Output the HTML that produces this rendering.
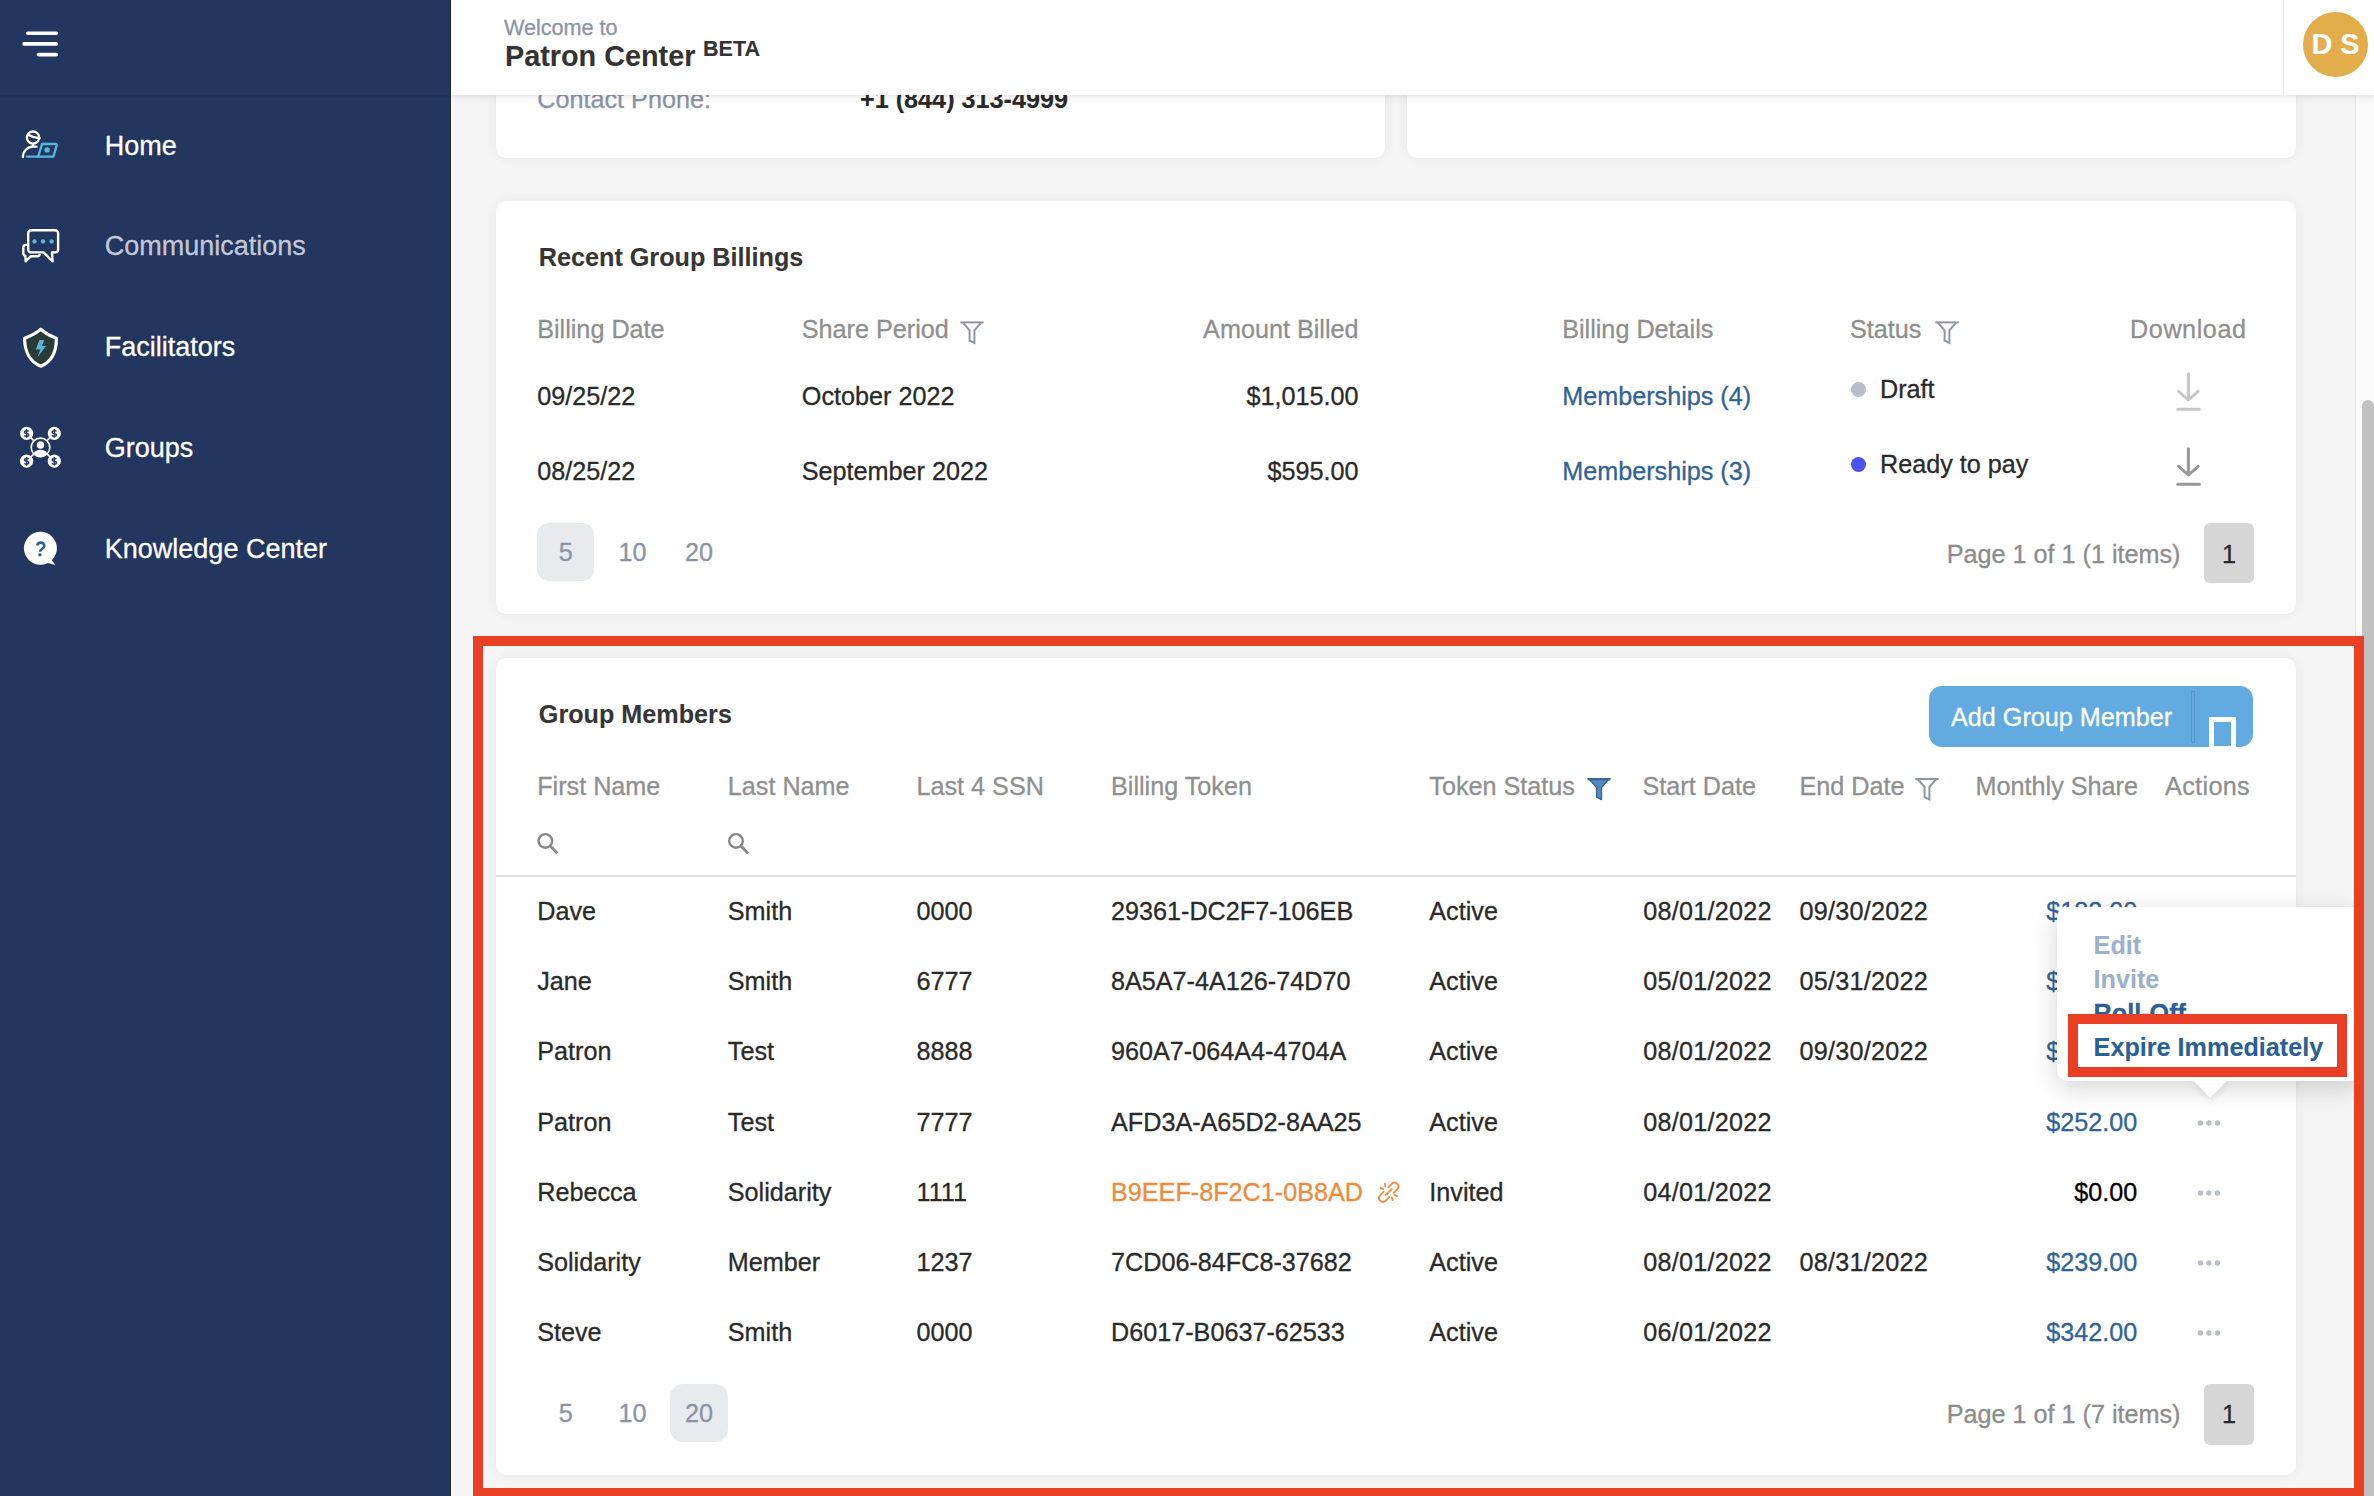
<!DOCTYPE html>
<html><head><meta charset="utf-8"><title>Patron Center</title>
<style>
html,body{margin:0;padding:0;}
body{width:2374px;height:1496px;position:relative;overflow:hidden;background:#f5f5f5;font-family:"Liberation Sans",sans-serif;}
.t{position:absolute;white-space:nowrap;line-height:40px;font-family:"Liberation Sans",sans-serif;-webkit-text-stroke:0.3px currentColor;}
</style></head><body>
<div style="position:absolute;left:451px;top:0;width:1px;height:1496px;background:#fff"></div>
<div style="position:absolute;background:#fff;border-radius:10px;box-shadow:0 0 12px rgba(40,55,90,0.07);left:496px;top:-40px;width:889px;height:198px"></div>
<div style="position:absolute;background:#fff;border-radius:10px;box-shadow:0 0 12px rgba(40,55,90,0.07);left:1407px;top:-40px;width:889px;height:198px"></div>
<div style="position:absolute;background:#fff;border-radius:10px;box-shadow:0 0 12px rgba(40,55,90,0.07);left:496px;top:201px;width:1800px;height:413px"></div>
<div style="position:absolute;background:#fff;border-radius:10px;box-shadow:0 0 12px rgba(40,55,90,0.07);left:496px;top:658px;width:1800px;height:817px"></div>
<div class="t" style="top:79px;font-size:25.2px;color:#8a94a6;left:537.3px;">Contact Phone:</div>
<div class="t" style="top:79px;font-size:25.2px;font-weight:700;-webkit-text-stroke:0.1px currentColor;color:#2a2a2a;left:860px;">+1 (844) 313-4999</div>
<div class="t" style="top:237px;font-size:25.2px;font-weight:700;-webkit-text-stroke:0.1px currentColor;color:#363636;left:538.8px;">Recent Group Billings</div>
<div class="t" style="top:309px;font-size:25.2px;color:#8f8f8f;left:537.2px;">Billing Date</div>
<div class="t" style="top:309px;font-size:25.2px;color:#8f8f8f;left:801.8px;">Share Period</div>
<div class="t" style="top:309px;font-size:25.2px;color:#8f8f8f;right:1015.5px;">Amount Billed</div>
<div class="t" style="top:309px;font-size:25.2px;color:#8f8f8f;left:1562.2px;">Billing Details</div>
<div class="t" style="top:309px;font-size:25.2px;color:#8f8f8f;left:1850px;">Status</div>
<div class="t" style="top:309px;font-size:25.2px;color:#8f8f8f;letter-spacing:0.55px;right:127.5px;">Download</div>
<div class="t" style="top:376px;font-size:25.2px;color:#2a2a2a;left:537.2px;">09/25/22</div>
<div class="t" style="top:376px;font-size:25.2px;color:#2a2a2a;left:801.8px;">October 2022</div>
<div class="t" style="top:376px;font-size:25.2px;color:#2a2a2a;right:1015.5px;">$1,015.00</div>
<div class="t" style="top:376px;font-size:25.2px;color:#2f6399;left:1562.2px;">Memberships (4)</div>
<div class="t" style="top:369px;font-size:25.2px;color:#2a2a2a;left:1880px;">Draft</div>
<div class="t" style="top:451px;font-size:25.2px;color:#2a2a2a;left:537.2px;">08/25/22</div>
<div class="t" style="top:451px;font-size:25.2px;color:#2a2a2a;left:801.8px;">September 2022</div>
<div class="t" style="top:451px;font-size:25.2px;color:#2a2a2a;right:1015.5px;">$595.00</div>
<div class="t" style="top:451px;font-size:25.2px;color:#2f6399;left:1562.2px;">Memberships (3)</div>
<div class="t" style="top:444px;font-size:25.2px;color:#2a2a2a;left:1880px;">Ready to pay</div>
<div style="position:absolute;left:1851px;top:382px;width:15px;height:15px;border-radius:50%;background:#b8bfcb"></div>
<div style="position:absolute;left:1851px;top:457px;width:15px;height:15px;border-radius:50%;background:#4b53f2"></div>
<div style="position:absolute;left:537px;top:523px;width:57px;height:58px;border-radius:12px;background:#e8eaee"></div>
<div class="t" style="top:532px;font-size:25.2px;color:#8a94a6;left:265.79999999999995px;width:600px;text-align:center;">5</div>
<div class="t" style="top:532px;font-size:25.2px;color:#8a94a6;left:332.5px;width:600px;text-align:center;">10</div>
<div class="t" style="top:532px;font-size:25.2px;color:#8a94a6;left:399px;width:600px;text-align:center;">20</div>
<div class="t" style="top:534px;font-size:25.2px;color:#8c8c8c;right:193.5px;">Page 1 of 1 (1 items)</div>
<div style="position:absolute;left:2204px;top:523px;width:50px;height:60px;border-radius:6px;background:#d6d6d6"></div>
<div class="t" style="top:534px;font-size:25.2px;color:#2a2a2a;left:1929px;width:600px;text-align:center;">1</div>
<div class="t" style="top:694px;font-size:25.2px;font-weight:700;-webkit-text-stroke:0.1px currentColor;color:#363636;left:538.8px;">Group Members</div>
<div style="position:absolute;left:1929px;top:686px;width:324px;height:61px;border-radius:13px;background:#62abe0;overflow:hidden"><div style="position:absolute;left:262px;top:5px;width:4px;height:52px;box-sizing:border-box;border:1px solid #5799cf"></div><div style="position:absolute;left:279.5px;top:31px;width:27.5px;height:34px;box-sizing:border-box;border:5.2px solid #fff"></div></div>
<div class="t" style="top:696.5px;font-size:25.2px;color:#fff;left:1951px;">Add Group Member</div>
<div class="t" style="top:766px;font-size:25.2px;color:#8f8f8f;left:537.2px;">First Name</div>
<div class="t" style="top:766px;font-size:25.2px;color:#8f8f8f;left:727.8px;">Last Name</div>
<div class="t" style="top:766px;font-size:25.2px;color:#8f8f8f;left:916.5px;">Last 4 SSN</div>
<div class="t" style="top:766px;font-size:25.2px;color:#8f8f8f;left:1111px;">Billing Token</div>
<div class="t" style="top:766px;font-size:25.2px;color:#8f8f8f;left:1429.3px;">Token Status</div>
<div class="t" style="top:766px;font-size:25.2px;color:#8f8f8f;left:1642.5px;">Start Date</div>
<div class="t" style="top:766px;font-size:25.2px;color:#8f8f8f;left:1799.5px;">End Date</div>
<div class="t" style="top:766px;font-size:25.2px;color:#8f8f8f;right:236px;">Monthly Share</div>
<div class="t" style="top:766px;font-size:25.2px;color:#8f8f8f;letter-spacing:0.35px;left:2165px;">Actions</div>
<div style="position:absolute;left:496px;top:875px;width:1800px;height:2px;background:#dedede"></div>
<div class="t" style="top:891px;font-size:25.2px;color:#2a2a2a;left:537.2px;">Dave</div>
<div class="t" style="top:891px;font-size:25.2px;color:#2a2a2a;left:727.8px;">Smith</div>
<div class="t" style="top:891px;font-size:25.2px;color:#2a2a2a;left:916.5px;">0000</div>
<div class="t" style="top:891px;font-size:25.2px;color:#2a2a2a;left:1111px;">29361-DC2F7-106EB</div>
<div class="t" style="top:891px;font-size:25.2px;color:#2a2a2a;left:1429.3px;">Active</div>
<div class="t" style="top:891px;font-size:25.2px;color:#2a2a2a;letter-spacing:0.25px;left:1643.2px;">08/01/2022</div>
<div class="t" style="top:891px;font-size:25.2px;color:#2a2a2a;letter-spacing:0.25px;left:1799.5px;">09/30/2022</div>
<div class="t" style="top:891px;font-size:25.2px;color:#2f6399;right:236.80000000000018px;">$182.00</div>
<div class="t" style="top:961px;font-size:25.2px;color:#2a2a2a;left:537.2px;">Jane</div>
<div class="t" style="top:961px;font-size:25.2px;color:#2a2a2a;left:727.8px;">Smith</div>
<div class="t" style="top:961px;font-size:25.2px;color:#2a2a2a;left:916.5px;">6777</div>
<div class="t" style="top:961px;font-size:25.2px;color:#2a2a2a;left:1111px;">8A5A7-4A126-74D70</div>
<div class="t" style="top:961px;font-size:25.2px;color:#2a2a2a;left:1429.3px;">Active</div>
<div class="t" style="top:961px;font-size:25.2px;color:#2a2a2a;letter-spacing:0.25px;left:1643.2px;">05/01/2022</div>
<div class="t" style="top:961px;font-size:25.2px;color:#2a2a2a;letter-spacing:0.25px;left:1799.5px;">05/31/2022</div>
<div class="t" style="top:961px;font-size:25.2px;color:#2f6399;right:236.80000000000018px;">$182.00</div>
<div class="t" style="top:1031px;font-size:25.2px;color:#2a2a2a;left:537.2px;">Patron</div>
<div class="t" style="top:1031px;font-size:25.2px;color:#2a2a2a;left:727.8px;">Test</div>
<div class="t" style="top:1031px;font-size:25.2px;color:#2a2a2a;left:916.5px;">8888</div>
<div class="t" style="top:1031px;font-size:25.2px;color:#2a2a2a;left:1111px;">960A7-064A4-4704A</div>
<div class="t" style="top:1031px;font-size:25.2px;color:#2a2a2a;left:1429.3px;">Active</div>
<div class="t" style="top:1031px;font-size:25.2px;color:#2a2a2a;letter-spacing:0.25px;left:1643.2px;">08/01/2022</div>
<div class="t" style="top:1031px;font-size:25.2px;color:#2a2a2a;letter-spacing:0.25px;left:1799.5px;">09/30/2022</div>
<div class="t" style="top:1031px;font-size:25.2px;color:#2f6399;right:236.80000000000018px;">$182.00</div>
<div class="t" style="top:1102px;font-size:25.2px;color:#2a2a2a;left:537.2px;">Patron</div>
<div class="t" style="top:1102px;font-size:25.2px;color:#2a2a2a;left:727.8px;">Test</div>
<div class="t" style="top:1102px;font-size:25.2px;color:#2a2a2a;left:916.5px;">7777</div>
<div class="t" style="top:1102px;font-size:25.2px;color:#2a2a2a;left:1111px;">AFD3A-A65D2-8AA25</div>
<div class="t" style="top:1102px;font-size:25.2px;color:#2a2a2a;left:1429.3px;">Active</div>
<div class="t" style="top:1102px;font-size:25.2px;color:#2a2a2a;letter-spacing:0.25px;left:1643.2px;">08/01/2022</div>
<div class="t" style="top:1102px;font-size:25.2px;color:#2f6399;right:236.80000000000018px;">$252.00</div>
<div class="t" style="top:1172px;font-size:25.2px;color:#2a2a2a;left:537.2px;">Rebecca</div>
<div class="t" style="top:1172px;font-size:25.2px;color:#2a2a2a;left:727.8px;">Solidarity</div>
<div class="t" style="top:1172px;font-size:25.2px;color:#2a2a2a;left:916.5px;">1111</div>
<div class="t" style="top:1172px;font-size:25.2px;color:#ee8a3c;left:1111px;">B9EEF-8F2C1-0B8AD</div>
<div class="t" style="top:1172px;font-size:25.2px;color:#2a2a2a;left:1429.3px;">Invited</div>
<div class="t" style="top:1172px;font-size:25.2px;color:#2a2a2a;letter-spacing:0.25px;left:1643.2px;">04/01/2022</div>
<div class="t" style="top:1172px;font-size:25.2px;color:#000;right:236.80000000000018px;">$0.00</div>
<div class="t" style="top:1242px;font-size:25.2px;color:#2a2a2a;left:537.2px;">Solidarity</div>
<div class="t" style="top:1242px;font-size:25.2px;color:#2a2a2a;left:727.8px;">Member</div>
<div class="t" style="top:1242px;font-size:25.2px;color:#2a2a2a;left:916.5px;">1237</div>
<div class="t" style="top:1242px;font-size:25.2px;color:#2a2a2a;left:1111px;">7CD06-84FC8-37682</div>
<div class="t" style="top:1242px;font-size:25.2px;color:#2a2a2a;left:1429.3px;">Active</div>
<div class="t" style="top:1242px;font-size:25.2px;color:#2a2a2a;letter-spacing:0.25px;left:1643.2px;">08/01/2022</div>
<div class="t" style="top:1242px;font-size:25.2px;color:#2a2a2a;letter-spacing:0.25px;left:1799.5px;">08/31/2022</div>
<div class="t" style="top:1242px;font-size:25.2px;color:#2f6399;right:236.80000000000018px;">$239.00</div>
<div class="t" style="top:1312px;font-size:25.2px;color:#2a2a2a;left:537.2px;">Steve</div>
<div class="t" style="top:1312px;font-size:25.2px;color:#2a2a2a;left:727.8px;">Smith</div>
<div class="t" style="top:1312px;font-size:25.2px;color:#2a2a2a;left:916.5px;">0000</div>
<div class="t" style="top:1312px;font-size:25.2px;color:#2a2a2a;left:1111px;">D6017-B0637-62533</div>
<div class="t" style="top:1312px;font-size:25.2px;color:#2a2a2a;left:1429.3px;">Active</div>
<div class="t" style="top:1312px;font-size:25.2px;color:#2a2a2a;letter-spacing:0.25px;left:1643.2px;">06/01/2022</div>
<div class="t" style="top:1312px;font-size:25.2px;color:#2f6399;right:236.80000000000018px;">$342.00</div>
<div style="position:absolute;left:670px;top:1384px;width:58px;height:58px;border-radius:13px;background:#e8eaee"></div>
<div class="t" style="top:1393px;font-size:25.2px;color:#8a94a6;left:265.79999999999995px;width:600px;text-align:center;">5</div>
<div class="t" style="top:1393px;font-size:25.2px;color:#8a94a6;left:332.5px;width:600px;text-align:center;">10</div>
<div class="t" style="top:1393px;font-size:25.2px;color:#8a94a6;left:399px;width:600px;text-align:center;">20</div>
<div class="t" style="top:1394px;font-size:25.2px;color:#8c8c8c;right:193.5px;">Page 1 of 1 (7 items)</div>
<div style="position:absolute;left:2204px;top:1384px;width:50px;height:61px;border-radius:6px;background:#d6d6d6"></div>
<div class="t" style="top:1394px;font-size:25.2px;color:#2a2a2a;left:1929px;width:600px;text-align:center;">1</div>
<svg style="position:absolute;left:0;top:0" width="2374" height="1496"><g transform="translate(960,321.4)" fill="none" stroke="#8e96a6" stroke-width="2" stroke-linejoin="miter"><path d="M0.3,1 H23.7"/><path d="M2.6,1 L9.6,9 V19.1 L14.4,21.4 V9 L21.4,1"/></g><g transform="translate(1935,321.4)" fill="none" stroke="#8e96a6" stroke-width="2" stroke-linejoin="miter"><path d="M0.3,1 H23.7"/><path d="M2.6,1 L9.6,9 V19.1 L14.4,21.4 V9 L21.4,1"/></g><g transform="translate(1915,778)" fill="none" stroke="#8e96a6" stroke-width="2" stroke-linejoin="miter"><path d="M0.3,1 H23.7"/><path d="M2.6,1 L9.6,9 V19.1 L14.4,21.4 V9 L21.4,1"/></g><g transform="translate(1587,778)"><path d="M0.5,1.2 H23.5" stroke="#3d6a9a" stroke-width="2.4"/><path d="M2.5,1.5 L9.6,9.6 V19.2 L14.5,21.5 V9.6 L21.5,1.5 Z" fill="#5388bf" stroke="#36659a" stroke-width="1.4" stroke-linejoin="round"/></g><g fill="none" stroke="#c6c6c6" stroke-width="3" stroke-linecap="round" stroke-linejoin="round"><path d="M2188.4,373.7 V399.5"/><path d="M2178.6,391.3 L2188.4,400 L2198.2,391.3"/><path d="M2177.8,409.2 H2199.3"/></g><g fill="none" stroke="#979797" stroke-width="3" stroke-linecap="round" stroke-linejoin="round"><path d="M2188.4,448.7 V474.5"/><path d="M2178.6,466.3 L2188.4,475 L2198.2,466.3"/><path d="M2177.8,484.2 H2199.3"/></g><g fill="none" stroke="#878787"><circle cx="545.3" cy="840.9" r="6.8" stroke-width="2.4"/><path d="M550.3,846.1 L557.3,853.1999999999999" stroke-width="2.8"/></g><g fill="none" stroke="#878787"><circle cx="736.0" cy="840.9" r="6.8" stroke-width="2.4"/><path d="M741.0,846.1 L748.0,853.1999999999999" stroke-width="2.8"/></g><g fill="none" stroke="#ef8c3e" stroke-width="1.9" stroke-linecap="round"><path d="M1388.5,1187.2 L1392,1183.7 A3.9,3.9 0 0 1 1397.5,1189.2 L1393.8,1192.9"/><path d="M1383.5,1191.8 L1380,1195.3 A3.9,3.9 0 0 0 1385.5,1200.8 L1389.2,1197.1"/><path d="M1385.7,1195.1 L1391.7,1189.1"/><path d="M1384.8,1183.6 L1385.5,1186.3"/><path d="M1380.6,1188.1 L1383.2,1189"/><path d="M1394.5,1195.1 L1397,1196"/><path d="M1391.8,1197.5 L1392.7,1200.1"/></g><circle cx="2200.4" cy="1123" r="2.7" fill="#b8bfcb"/><circle cx="2208.9" cy="1123" r="2.7" fill="#b8bfcb"/><circle cx="2217.5" cy="1123" r="2.7" fill="#b8bfcb"/><circle cx="2200.4" cy="1193" r="2.7" fill="#b8bfcb"/><circle cx="2208.9" cy="1193" r="2.7" fill="#b8bfcb"/><circle cx="2217.5" cy="1193" r="2.7" fill="#b8bfcb"/><circle cx="2200.4" cy="1263" r="2.7" fill="#b8bfcb"/><circle cx="2208.9" cy="1263" r="2.7" fill="#b8bfcb"/><circle cx="2217.5" cy="1263" r="2.7" fill="#b8bfcb"/><circle cx="2200.4" cy="1333" r="2.7" fill="#b8bfcb"/><circle cx="2208.9" cy="1333" r="2.7" fill="#b8bfcb"/><circle cx="2217.5" cy="1333" r="2.7" fill="#b8bfcb"/></svg>
<div style="position:absolute;left:2057px;top:907px;width:305px;height:174px;background:#fff;border-radius:10px;box-shadow:0 7px 26px rgba(0,0,0,0.17);z-index:5"></div>
<svg style="position:absolute;left:2180px;top:1075px;z-index:5;overflow:visible" width="60" height="30"><path d="M13.7,6 L30.3,23 L47,6 Z" fill="#fff" style="filter:drop-shadow(0 3px 3px rgba(0,0,0,0.10))"/></svg>
<div class="t" style="top:925px;font-size:25.2px;font-weight:700;-webkit-text-stroke:0.1px currentColor;color:#9bb0cc;z-index:6;left:2093.6px;">Edit</div>
<div class="t" style="top:959px;font-size:25.2px;font-weight:700;-webkit-text-stroke:0.1px currentColor;color:#9bb0cc;z-index:6;left:2093.6px;">Invite</div>
<div style="position:absolute;left:2057px;top:990px;width:290px;height:25px;overflow:hidden;z-index:6">
<div class="t" style="top:3px;left:36.6px;font-size:25.2px;font-weight:700;color:#2c5f95">Roll-Off</div>
</div>
<div class="t" style="top:1027px;font-size:25.2px;font-weight:700;-webkit-text-stroke:0.1px currentColor;color:#2c5f95;z-index:6;left:2093.6px;">Expire Immediately</div>
<div style="position:absolute;left:473px;top:636px;width:1891px;height:862px;box-sizing:border-box;border:10px solid #e94025;z-index:10"></div>
<div style="position:absolute;left:2068px;top:1014px;width:279px;height:63px;box-sizing:border-box;border:10px solid #e94025;z-index:10"></div>
<div style="position:absolute;left:2355px;top:95px;width:19px;height:1401px;background:#fafafa;border-left:1px solid #e6e6e6;box-sizing:border-box;z-index:9"></div>
<div style="position:absolute;left:2362px;top:400px;width:12px;height:1096px;background:#c1c1c1;border-radius:6px 6px 0 0;z-index:9"></div>
<div style="position:absolute;left:451px;top:0;width:1923px;height:95px;background:#fff;box-shadow:0 1px 8px rgba(0,0,0,0.13);z-index:20"><div style="position:absolute;left:1832px;top:0;width:1px;height:95px;background:#e6e6e6"></div><div style="position:absolute;left:1852px;top:12px;width:65px;height:65px;border-radius:50%;background:#e3ad4c"></div></div>
<div class="t" style="top:8px;font-size:21.6px;color:#8a94a6;z-index:21;left:504px;">Welcome to</div>
<div class="t" style="top:36px;font-size:28.8px;font-weight:700;-webkit-text-stroke:0.1px currentColor;color:#333;z-index:21;left:505px;">Patron Center</div>
<div class="t" style="top:29px;font-size:21.6px;font-weight:700;-webkit-text-stroke:0.1px currentColor;color:#333;z-index:21;left:703px;">BETA</div>
<div class="t" style="top:24px;font-size:28.8px;font-weight:700;-webkit-text-stroke:0.1px currentColor;color:#fff;z-index:21;left:2035.5px;width:600px;text-align:center;">D S</div>
<div style="position:absolute;left:0;top:0;width:451px;height:1496px;background:#22365f;z-index:30"><div style="position:absolute;left:0;top:95px;width:451px;height:4px;background:linear-gradient(#1f3158,#22365f)"></div><div style="position:absolute;left:450px;top:0;width:1px;height:1496px;background:#172a50"></div><svg style="position:absolute;left:0;top:0" width="451" height="600"><g stroke="#fff" stroke-width="3.6" stroke-linecap="round"><path d="M27.8,33.2 H56.2"/><path d="M24.1,43.9 H56.2"/><path d="M38.6,54.6 H56.2"/></g><g fill="none" stroke-width="2.3" stroke-linecap="round" stroke-linejoin="round"><circle cx="33" cy="137.6" r="6.1" stroke="#fff"/><path d="M28.6,135 Q33.5,137.8 39.6,138.2" stroke="#fff"/><path d="M22.9,157.2 C22.9,151.3 27.3,146.7 33,146.7 H36.6" stroke="#fff"/><path d="M33,144 V146" stroke="#fff"/><path d="M42,144 H55.5 Q57,144 56.6,145.6 L53.4,156.6 H38.2 Z" stroke="#55b8dc"/><path d="M26.8,156.6 H38.4" stroke="#55b8dc"/><circle cx="47.1" cy="149.9" r="1.7" fill="#55b8dc" stroke="#55b8dc" stroke-width="2"/></g><g fill="none" stroke="#fff" stroke-width="2.4" stroke-linejoin="round"><path d="M28.3,244.9 H25.9 A2.6,2.6 0 0 0 23.3,247.5 V253.4 A2.2,2.2 0 0 0 25.3,255.6 L25.7,261.4 L31,256.2 H37.3 A2.4,2.4 0 0 0 39.7,253.8"/><path d="M31.1,230.3 H55.2 A2.9,2.9 0 0 1 58.1,233.2 V249.5 A2.9,2.9 0 0 1 55.2,252.4 H52 L52.6,261.4 L43.6,252.4 H31.1 A2.9,2.9 0 0 1 28.2,249.5 V233.2 A2.9,2.9 0 0 1 31.1,230.3 Z"/></g><g fill="#55b8dc"><circle cx="34.5" cy="241.4" r="2.2"/><circle cx="43" cy="241.4" r="2.2"/><circle cx="51.6" cy="241.4" r="2.2"/></g><path d="M40.8,329.2 C36.5,333.2 30.8,336 24.6,338.2 C24.6,352.5 31,362.2 40.8,366.2 C50.6,362.2 56.4,352.5 56.4,338.2 C50.6,336 45.2,333.2 40.8,329.2 Z" fill="#293a37" stroke="#fff" stroke-width="3.2" stroke-linejoin="round"/><path d="M44.2,340 L39.3,340 L35.8,349.4 L40.4,349.4 L37.2,357.6 L46.1,346 L41.8,346 Z" fill="#55b6d8"/><g><path d="M26.6,433.4 L33.74,440.59" stroke="#fff" stroke-width="1.6"/><path d="M54.3,433.4 L47.24,440.56" stroke="#fff" stroke-width="1.6"/><path d="M26.6,461.2 L33.69,454.16" stroke="#fff" stroke-width="1.6"/><path d="M54.3,461.2 L47.29,454.19" stroke="#fff" stroke-width="1.6"/><circle cx="40.5" cy="447.4" r="9.3" fill="none" stroke="#fff" stroke-width="1.6"/><circle cx="40.5" cy="445" r="3.7" fill="#fff"/><path d="M33.6,453.2 C35.5,450.8 38,449.8 40.5,449.8 C43,449.8 45.5,450.8 47.4,453.2 C45.6,455.6 43.2,456.7 40.5,456.7 C37.8,456.7 35.4,455.6 33.6,453.2 Z" fill="#fff"/><circle cx="26.6" cy="433.4" r="6.6" fill="#fff"/><path d="M28.6,431.5 C28.1,430.4 24.400000000000002,430.29999999999995 24.400000000000002,432.2 C24.400000000000002,433.9 28.8,433.09999999999997 28.8,434.9 C28.8,436.7 25.0,436.79999999999995 24.400000000000002,435.4" fill="none" stroke="#22365f" stroke-width="1.5"/><path d="M26.6,429.09999999999997 V437.7" stroke="#22365f" stroke-width="1.3"/><circle cx="54.3" cy="433.4" r="6.6" fill="#fff"/><path d="M56.3,431.5 C55.8,430.4 52.099999999999994,430.29999999999995 52.099999999999994,432.2 C52.099999999999994,433.9 56.5,433.09999999999997 56.5,434.9 C56.5,436.7 52.699999999999996,436.79999999999995 52.099999999999994,435.4" fill="none" stroke="#22365f" stroke-width="1.5"/><path d="M54.3,429.09999999999997 V437.7" stroke="#22365f" stroke-width="1.3"/><circle cx="26.6" cy="461.2" r="6.6" fill="#fff"/><path d="M28.6,459.3 C28.1,458.2 24.400000000000002,458.09999999999997 24.400000000000002,460.0 C24.400000000000002,461.7 28.8,460.9 28.8,462.7 C28.8,464.5 25.0,464.59999999999997 24.400000000000002,463.2" fill="none" stroke="#22365f" stroke-width="1.5"/><path d="M26.6,456.9 V465.5" stroke="#22365f" stroke-width="1.3"/><circle cx="54.3" cy="461.2" r="6.6" fill="#fff"/><path d="M56.3,459.3 C55.8,458.2 52.099999999999994,458.09999999999997 52.099999999999994,460.0 C52.099999999999994,461.7 56.5,460.9 56.5,462.7 C56.5,464.5 52.699999999999996,464.59999999999997 52.099999999999994,463.2" fill="none" stroke="#22365f" stroke-width="1.5"/><path d="M54.3,456.9 V465.5" stroke="#22365f" stroke-width="1.3"/></g><circle cx="40.4" cy="548.3" r="16.5" fill="#fff"/><path d="M50,558 L55.5,565 L46,562.5 Z" fill="#fff"/><path d="M37.1,545.6 C37.5,543.6 38.9,542.6 40.7,542.6 C42.8,542.6 44.3,544 44.3,545.8 C44.3,547.7 42.9,548.4 41.5,549.5 C40.5,550.3 40.1,551 40.1,551.8" fill="none" stroke="#2e6296" stroke-width="2.6"/><circle cx="39.9" cy="554.7" r="1.75" fill="#2e6296"/></svg></div>
<div class="t" style="top:126px;font-size:27px;color:#fff;z-index:31;left:104.8px;">Home</div>
<div class="t" style="top:226px;font-size:27px;color:#c2c8d4;z-index:31;left:104.8px;">Communications</div>
<div class="t" style="top:327px;font-size:27px;color:#fff;z-index:31;left:104.8px;">Facilitators</div>
<div class="t" style="top:428px;font-size:27px;color:#fff;z-index:31;left:104.8px;">Groups</div>
<div class="t" style="top:529px;font-size:27px;color:#fff;z-index:31;left:104.8px;">Knowledge Center</div>
</body></html>
